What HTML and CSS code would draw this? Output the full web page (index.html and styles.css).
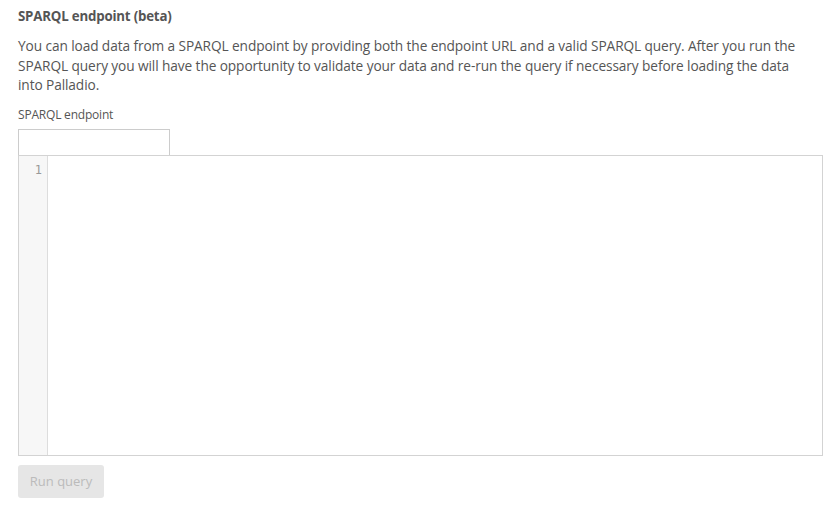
FILE: index.html
```html
<!DOCTYPE html>
<html>
<head>
<meta charset="utf-8">
<link rel="stylesheet" href="styles.css">
</head>
<body>
<div class="panel">
  <h4 class="title">SPARQL endpoint (beta)</h4>
  <p class="intro">You can load data from a SPARQL endpoint by providing both the endpoint URL and a valid SPARQL query. After you run the SPARQL query you will have the opportunity to validate your data and re-run the query if necessary before loading the data<br>into Palladio.</p>
  <label class="label">SPARQL endpoint</label>
  <input class="endpoint" type="text">
  <div class="editor">
    <div class="gutter"><div class="lineno">1</div></div>
    <div class="code"></div>
  </div>
  <button class="run" disabled>Run query</button>
</div>
</body>
</html>
```

FILE: styles.css
```css
html, body {
  margin: 0;
  padding: 0;
  background: #fff;
}
body {
  font-family: "Open Sans", "Noto Sans", sans-serif;
  color: #555;
}
.panel {
  padding: 6px 10px 0 18px;
  display: flex;
  flex-direction: column;
  align-items: flex-start;
}
.title {
  margin: 0;
  font-size: 13.3px;
  font-weight: 700;
  line-height: 20px;
  letter-spacing: -0.2px;
}
.intro {
  margin: 10px 0 0 0;
  font-size: 13.7px;
  line-height: 19.5px;
  letter-spacing: -0.1px;
  width: 805px;
}
.label {
  margin-top: 12px;
  font-size: 12px;
  line-height: 16px;
  letter-spacing: -0.2px;
}
.endpoint {
  margin: 6px 0 0 0;
  width: 152px;
  height: 26px;
  box-sizing: border-box;
  border: 1px solid #ccc;
  border-bottom: none;
  padding: 0;
  outline: none;
}
.editor {
  display: flex;
  width: 805px;
  height: 301px;
  box-sizing: border-box;
  border: 1px solid #d3d3d3;
}
.gutter {
  width: 28px;
  background: #f7f7f7;
  border-right: 1px solid #ddd;
}
.lineno {
  font-family: "DejaVu Sans Mono", monospace;
  font-size: 12px;
  color: #999;
  text-align: right;
  padding: 7px 5px 0 0;
  line-height: 14px;
}
.code {
  flex: 1;
}
.run {
  margin-top: 9px;
  width: 86px;
  height: 33px;
  border: none;
  border-radius: 3px;
  background: #e6e6e6;
  color: #bbb;
  font-family: "Open Sans", "Noto Sans", sans-serif;
  font-size: 13px;
  padding: 0;
}
```
